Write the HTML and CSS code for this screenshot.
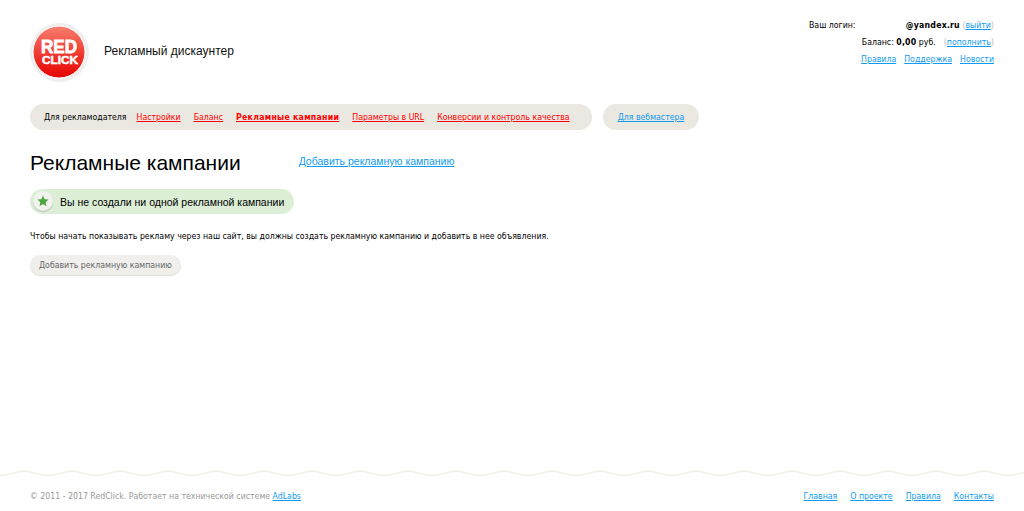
FILE: index.html
```html
<!DOCTYPE html>
<html lang="ru">

<head>
    <meta charset="utf-8">
    <title>Рекламные кампании</title>
    <link rel="stylesheet" href="styles.css">
</head>

<body>
    <header class="top">
        <div class="brand">
            <svg class="logo" width="60" height="60" viewBox="0 0 60 60">
                <defs>
                    <linearGradient id="redball" x1="0" y1="0" x2="0" y2="1">
                        <stop offset="0" stop-color="#f77f70"/>
                        <stop offset="0.45" stop-color="#f0453a"/>
                        <stop offset="1" stop-color="#e60000"/>
                    </linearGradient>
                </defs>
                <circle cx="29.500" cy="29.500" r="29.500" fill="#efefef"/>
                <circle cx="29" cy="29" r="26" fill="url(#redball)" stroke="#fff" stroke-width="1"/>
                <text x="29" y="30" class="logo-red" textLength="36" lengthAdjust="spacingAndGlyphs">RED</text>
                <text x="30" y="40.500" class="logo-click" textLength="36" lengthAdjust="spacingAndGlyphs">CLICK</text>
            </svg>
            <span class="slogan">Рекламный дискаунтер</span>
        </div>
        <div class="account">
            <div class="account-row login-row">
                <span>Ваш логин:</span>
                <span><b>@yandex.ru</b> <span class="paren">(<a href="#">выйти</a>)</span></span>
            </div>
            <div class="account-row">
                <span>Баланс: <b>0,00</b> руб.</span>
                <span class="paren">(<a href="#">пополнить</a>)</span>
            </div>
            <div class="account-row">
                <a href="#">Правила</a>
                <a href="#">Поддержка</a>
                <a href="#">Новости</a>
            </div>
        </div>
    </header>

    <nav class="menu">
        <div class="pill pill-main">
            <span class="menu-title">Для рекламодателя</span>
            <a href="#">Настройки</a>
            <a href="#">Баланс</a>
            <a href="#" class="current">Рекламные кампании</a>
            <a href="#">Параметры в URL</a>
            <a href="#">Конверсии и контроль качества</a>
        </div>
        <div class="pill pill-web">
            <a href="#">Для вебмастера</a>
        </div>
    </nav>

    <main class="content">
        <div class="title-row">
            <h1>Рекламные кампании</h1>
            <a href="#" class="add-link">Добавить рекламную кампанию</a>
        </div>
        <div class="notice">
            <span class="notice-icon">
                <svg width="12" height="12" viewBox="0 0 12 12"><polygon points="6,0.500 7.600,4.200 11.600,4.600 8.600,7.200 9.500,11.200 6,9.100 2.500,11.200 3.400,7.200 0.400,4.600 4.400,4.200" fill="#4aa63c"/></svg>
            </span>
            Вы не создали ни одной рекламной кампании
        </div>
        <p class="hint">Чтобы начать показывать рекламу через наш сайт, вы должны создать рекламную кампанию и добавить в нее объявления.</p>
        <button class="btn">Добавить рекламную кампанию</button>
    </main>

    <footer class="bottom">
        <svg class="wave" width="100%" height="9">
            <defs>
                <pattern id="wavy" width="48" height="9" patternUnits="userSpaceOnUse" x="24">
                    <path d="M0 3 C8 3 14 7.500 24 7.500 C34 7.500 40 3 48 3" fill="none" stroke="#f1efe8" stroke-width="1.500"/>
                </pattern>
            </defs>
            <rect width="100%" height="9" fill="url(#wavy)"/>
        </svg>
        <div class="foot-row">
            <span class="copy">© 2011 - 2017 RedClick. Работает на технической системе <a href="#">AdLabs</a></span>
            <div class="foot-links">
                <a href="#">Главная</a>
                <a href="#">О проекте</a>
                <a href="#">Правила</a>
                <a href="#">Контакты</a>
            </div>
        </div>
    </footer>
</body>

</html>
```
FILE: styles.css
```css
html, body {
    margin: 0;
    padding: 0;
}

body {
    display: flex;
    flex-direction: column;
    height: 511px;
    overflow: hidden;
    background-color: #fff;
    color: #000;
    font-family: "DejaVu Sans Condensed", "DejaVu Sans", sans-serif;
    font-stretch: condensed;
    font-size: 8.700px;
}

a {
    color: #0f9bf0;
}

b {
    letter-spacing: 0.200px;
}

.top {
    display: flex;
    justify-content: space-between;
    padding: 17px 30px 0 30px;
    height: 104px;
    box-sizing: border-box;
}

.brand {
    display: flex;
    align-items: center;
    gap: 14px;
    height: 60px;
    margin-top: 6px;
}

.logo-red, .logo-click {
    fill: #fff;
    font-family: "Liberation Sans", sans-serif;
    font-stretch: normal;
    font-weight: bold;
    text-anchor: middle;
}

.logo-red {
    font-size: 18px;
    stroke: #fff;
    stroke-width: 0.800px;
}

.logo-click {
    font-size: 11px;
    stroke: #fff;
    stroke-width: 0.500px;
}

.slogan {
    font-family: "Liberation Sans", sans-serif;
    font-stretch: normal;
    font-size: 12px;
    color: #111;
    margin-bottom: 4px;
}

.account {
    width: 185px;
    line-height: 17px;
}

.account-row {
    display: flex;
    justify-content: flex-end;
    gap: 8px;
}

.login-row {
    justify-content: space-between;
}

.paren {
    color: #bbb;
}

.menu {
    display: flex;
    gap: 11px;
    padding: 0 30px;
}

.pill {
    display: flex;
    align-items: center;
    height: 26px;
    border-radius: 13px;
    background-color: #ebe8e2;
}

.pill-main {
    gap: 13px;
    padding: 0 22px 0 14px;
}

.menu-title {
    margin-right: -3px;
}

.pill-main a {
    color: #f00;
}

.pill-main a.current {
    font-weight: bold;
    letter-spacing: 0.280px;
}

.pill-web {
    padding: 0 15px;
}

.content {
    padding: 0 30px;
}

.title-row {
    display: flex;
    align-items: center;
    gap: 58px;
    margin-top: 20px;
    height: 26px;
}

h1 {
    margin: 0;
    font-family: "Liberation Sans", sans-serif;
    font-stretch: normal;
    font-size: 21px;
    font-weight: normal;
}

.add-link {
    font-family: "Liberation Sans", sans-serif;
    font-stretch: normal;
    font-size: 10.500px;
    margin-bottom: 4px;
}

.notice {
    display: inline-flex;
    align-items: center;
    gap: 7px;
    height: 25px;
    margin-top: 13px;
    padding: 0 10px 0 3px;
    border-radius: 13px;
    background-color: #dcefd6;
    font-family: "Liberation Sans", sans-serif;
    font-stretch: normal;
    font-size: 10.500px;
}

.notice-icon {
    display: flex;
    align-items: center;
    justify-content: center;
    width: 20px;
    height: 20px;
    margin-bottom: 1px;
    border-radius: 50%;
    background-color: #f2f2ee;
    box-shadow: 0 1px 1px #bbb;
}

.hint {
    margin: 15px 0 0 0;
    line-height: 14px;
}

.btn {
    display: block;
    height: 20px;
    margin-top: 12px;
    padding: 0 9px;
    border: 0;
    border-radius: 10px;
    background-color: #f0efec;
    box-shadow: 0 1px 1px #ddd;
    color: #666;
    font-family: inherit;
    font-stretch: inherit;
    font-size: 8.700px;
}

.bottom {
    margin-top: auto;
}

.wave {
    display: block;
}

.foot-row {
    display: flex;
    justify-content: space-between;
    padding: 13px 30px 9px 30px;
    line-height: 12px;
}

.copy {
    color: #999;
}

.foot-links {
    display: flex;
    gap: 13px;
}
```
